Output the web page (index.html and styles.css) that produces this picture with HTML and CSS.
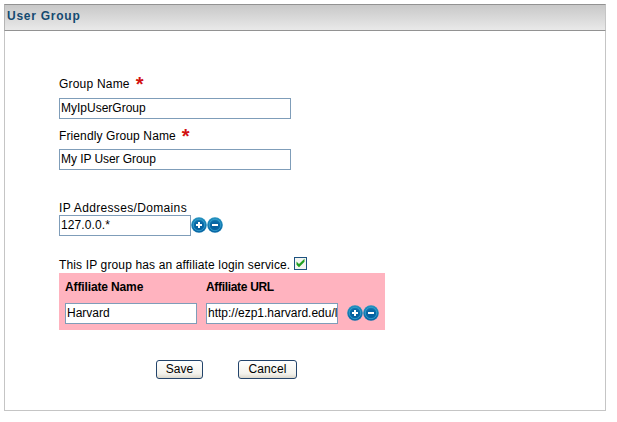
FILE: index.html
```html
<!DOCTYPE html>
<html lang="en">
<head>
<meta charset="utf-8">
<title>User Group</title>
<link rel="stylesheet" href="styles.css">
</head>
<body>
<svg class="defs" aria-hidden="true">
  <defs>
    <radialGradient id="ball" cx="50%" cy="62%" r="55%">
      <stop offset="0" stop-color="#045c9c"/><stop offset=".62" stop-color="#0968a6"/><stop offset="1" stop-color="#238fbd"/>
    </radialGradient>
  </defs>
  <symbol id="plus" viewBox="0 0 16 16"><circle cx="8" cy="8" r="7.8" fill="url(#ball)"/><circle cx="8" cy="8" r="5.7" fill="none" stroke="#36a3d0" stroke-width=".8"/><path d="M8 5v6M5 8h6" stroke="#fff" stroke-width="2"/></symbol>
  <symbol id="minus" viewBox="0 0 16 16"><circle cx="8" cy="8" r="7.8" fill="url(#ball)"/><circle cx="8" cy="8" r="5.7" fill="none" stroke="#36a3d0" stroke-width=".8"/><path d="M5 8h6" stroke="#fff" stroke-width="2"/></symbol>
</svg>
<section class="panel">
  <h1 class="title"><span class="title-text">User Group</span></h1>
  <form class="form">
    <label class="label"><span class="t-group">Group Name</span><b class="required">*</b></label>
    <div class="field wide"><span class="v-group">MyIpUserGroup</span></div>
    <label class="label second"><span class="t-friendly">Friendly Group Name</span><b class="required">*</b></label>
    <div class="field wide"><span class="v-friendly">My IP User Group</span></div>
    <label class="label third"><span class="t-ip">IP Addresses/Domains</span></label>
    <div class="row">
      <div class="field"><span class="v-ip">127.0.0.*</span></div>
      <svg class="icon"><use href="#plus"/></svg><svg class="icon"><use href="#minus"/></svg>
    </div>
    <div class="check-row">
      <span class="t-check">This IP group has an affiliate login service.</span>
      <svg class="check" viewBox="0 0 13 13"><rect x=".5" y=".5" width="12" height="12" fill="#f3f5f1" stroke="#1d5280"/><path d="M2.5 4.5v3.2L5 10.2l5.5-5.5V1.8L5 7z" fill="#21a121"/></svg>
    </div>
    <div class="affiliates">
      <div class="column"><b class="t-name">Affiliate Name</b><div class="field"><span class="v-name">Harvard</span></div></div>
      <div class="column"><b class="t-url">Affiliate URL</b><div class="field"><span class="v-url">http://ezp1.harvard.edu/l</span></div></div>
      <div class="actions"><svg class="icon"><use href="#plus"/></svg><svg class="icon"><use href="#minus"/></svg></div>
    </div>
    <div class="buttons">
      <button type="button" class="button save">Save</button>
      <button type="button" class="button cancel">Cancel</button>
    </div>
  </form>
</section>
</body>
</html>
```
FILE: styles.css
```css
* { box-sizing: border-box; }
body { margin: 0; background: #fff; color: #000; font: 12px/15px "Liberation Sans", Arial, sans-serif; }
.defs { display: block; width: 0; height: 0; }
.panel { width: 602px; height: 407px; margin: 4px 0 0 4px; border: 1px solid #c5c5c5; border-top: 0; }
.title { height: 27px; margin: 0 -1px; padding: 4px 2px; border: 1px solid #929292; border-left-color: #b5b5b5; border-right-color: #c5c5c5; background: linear-gradient(#c8c8c8, #e9e9e9); color: #144a70; font-size: 12px; line-height: 15px; }
.title-text { letter-spacing: .75px; }
.form { padding: 45px 0 0 54px; }
.label { display: flex; height: 18px; line-height: 16px; white-space: pre; }
.second { margin-top: 9px; height: 17px; }
.third { margin-top: 30px; height: 15px; }
.required { margin-left: 6px; color: #d21111; font: bold 20px/16px "Liberation Sans", Arial, sans-serif; }
.label + .field { margin-top: 4px; }
.field { width: 132px; height: 21px; padding: 2px 1px; border: 1px solid #7f9db9; background: #fff; overflow: hidden; white-space: nowrap; line-height: 15px; }
.wide { width: 232px; }
.row { display: flex; align-items: flex-start; }
.row .icon { margin-top: 2px; }
.icon { display: block; width: 16px; height: 16px; flex: none; }
.check-row { display: flex; height: 16px; margin-top: 21px; }
.t-check { line-height: 17px; letter-spacing: .14px; }
.t-group { letter-spacing: .2px; }
.t-friendly { letter-spacing: .11px; }
.t-ip { letter-spacing: .34px; }
.v-ip { letter-spacing: .1px; }
.v-friendly { letter-spacing: -.06px; }
.check { width: 13px; height: 13px; margin-left: 4px; }
.affiliates { display: flex; width: 326px; height: 57px; padding: 6px; gap: 9px; background: #ffb3bf; }
.column { width: 132px; }
.column b { display: block; height: 24px; line-height: 16px; width: max-content; }
.column .t-name { letter-spacing: -.13px; }
.column .t-url { letter-spacing: -.32px; }
.actions { display: flex; padding-top: 26px; }
.buttons { display: flex; gap: 35px; margin: 30px 0 0 97px; }
.button { height: 19px; padding: 0; border: 1px solid #23446b; border-radius: 3px; background: linear-gradient(#fff, #f3f2ec 75%, #dcd8cc); color: #000; font: 12px/17px "Liberation Sans", Arial, sans-serif; }
.save { width: 47px; }
.cancel { width: 59px; letter-spacing: .1px; }
```
